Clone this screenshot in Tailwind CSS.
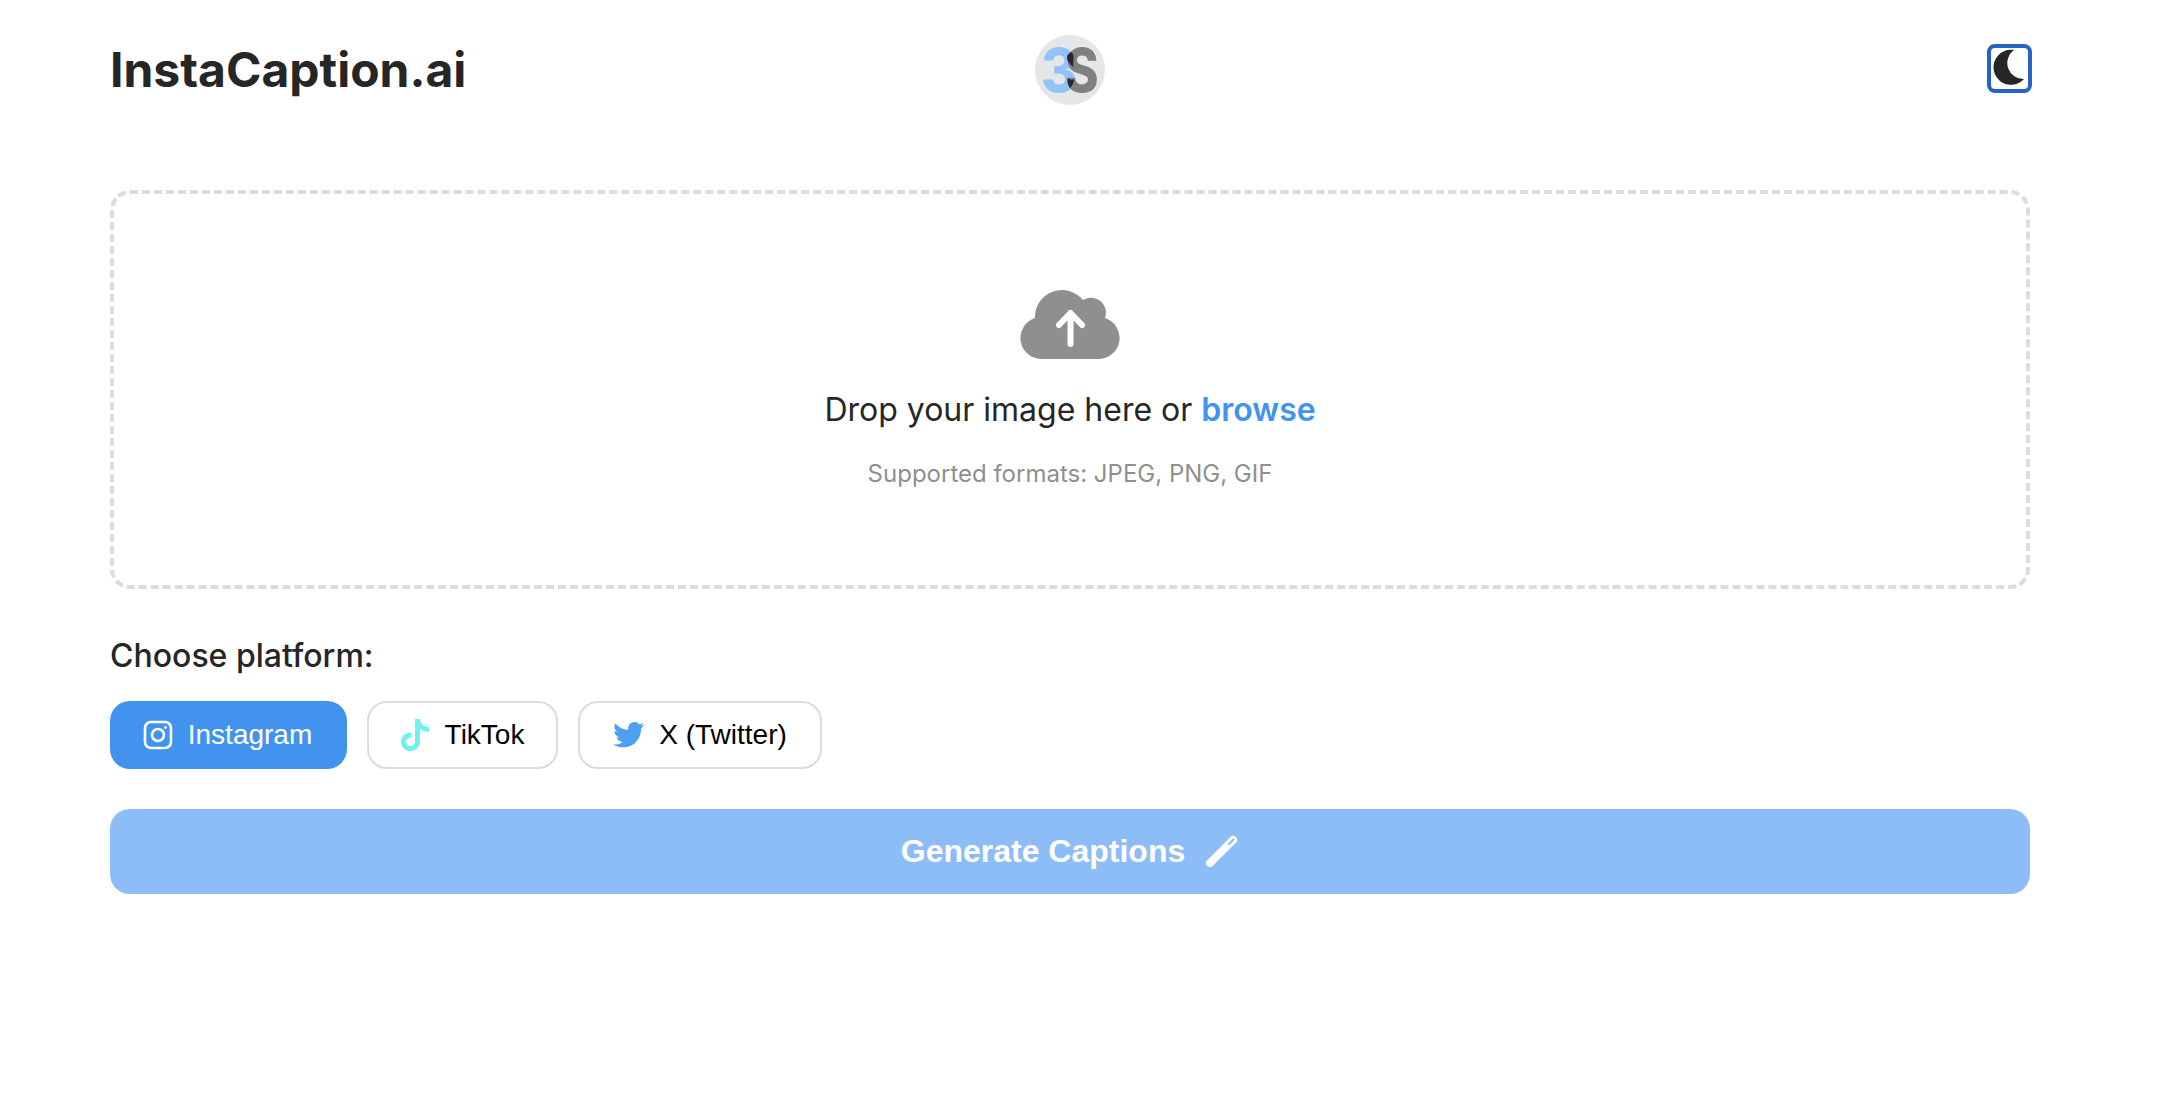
<!DOCTYPE html>
<html>
<head>
<meta charset="utf-8">
<script src="https://cdn.jsdelivr.net/npm/@tailwindcss/browser@4"></script>
</head>
<body class="bg-white font-['Inter',sans-serif] text-[#262626]">
<div class="w-[1924px] h-[1118px] ml-[110px] overflow-hidden">
  <header class="flex items-center justify-between w-[1920px] h-[140px]">
    <h1 class="text-[48px] leading-none font-bold w-[400px]">InstaCaption.ai</h1>
    <div class="relative w-[70px] h-[70px] rounded-full bg-[#e5e6e7] overflow-hidden font-extrabold text-[60px] leading-[70px]">
      <span class="absolute left-[6px] top-0 origin-left scale-x-[0.92] text-[#93c2fb]">3</span>
      <span class="absolute left-[30px] top-0 origin-left scale-x-[0.85] text-[#808080]">S</span>
      <svg class="absolute left-0 top-0" width="70" height="70" viewBox="0 0 70 70"><path d="M36 17 C38 18 39 21 38.500 24 C38 28 38 30 39 32 C35 30 32 26 32 22 C32 20 34 18 36 17 Z" fill="#2a2535"/><path d="M33 43 C35 45 37 45 39 44 C39 48 37 51 35 53 C33 50 32 47 33 43 Z" fill="#2a2535"/></svg>
    </div>
    <div class="w-[400px] flex justify-end self-start mt-[44px]">
      <button class="w-[45px] h-[49px] mr-[-2px] shrink-0 border-[4px] border-[#2563c9] rounded-[8px] flex items-start justify-start pl-[1px] pt-[1px]">
        <svg width="34" height="36" viewBox="0 0 34 36" class="shrink-0"><path d="M22 1 A17.500 17.500 0 1 0 32 30 A16 16 0 0 1 22 1 Z" fill="#262626"/></svg>
      </button>
    </div>
  </header>
  <main class="mt-[50px] w-[1920px]">
    <section class="h-[399px] border-[4px] border-dashed border-[#dcdcdc] rounded-[20px] flex flex-col items-center pt-[93px]">
      <svg width="100" height="72" viewBox="0 0 100 72" class="mb-[31px]">
        <path d="M21 72 A21 21 0 0 1 15 31 A27 27 0 0 1 63 13 A15 15 0 0 1 85 31 A21 21 0 0 1 79 72 Z" fill="#8f8f8f"/>
        <path d="M50.500 57 V26 M39 38 L50.500 26 L62 38" fill="none" stroke="#fff" stroke-width="6" stroke-linecap="round" stroke-linejoin="round"/>
      </svg>
      <p class="text-[32px] leading-[40px]">Drop your image here or <span class="text-[#4293f0] font-semibold">browse</span></p>
      <p class="mt-[29px] text-[24px] leading-[30px] text-[#8f8f8f]">Supported formats: JPEG, PNG, GIF</p>
    </section>
    <h2 class="mt-[47px] text-[32px] leading-[40px] font-medium">Choose platform:</h2>
    <div class="mt-[25px] flex gap-[20px] font-['Liberation_Sans',sans-serif] text-[28px] text-black">
      <button class="w-[237px] h-[68px] pr-[2px] rounded-[20px] bg-[#4293f0] text-white flex items-center justify-center gap-[15px]">
        <svg width="30" height="30" viewBox="0 0 30 30" fill="none" stroke="#fff" stroke-width="2.600"><rect x="2" y="2" width="26" height="26" rx="6"/><circle cx="15" cy="15" r="6"/><circle cx="22.500" cy="7.500" r="1.400" fill="#fff" stroke="none"/></svg>
        <span>Instagram</span>
      </button>
      <button class="w-[191px] h-[68px] rounded-[20px] border-[2px] border-[#dcdcdc] flex items-center justify-center gap-[14px]">
        <svg width="30" height="34" viewBox="0 0 30 34"><path d="M14 1 H19 C19.500 6 23 9 28 9 V14 C24.500 14 21.500 13 19 11 V23 C19 29 14.500 33 9.500 33 C4 33 0 29 0 23.500 C0 18 4.500 14 10.500 14.500 V19.500 C7.500 19 5 21 5 23.500 C5 26 7 28 9.500 28 C12 28 14 26 14 23 Z" fill="#72f0ec"/></svg>
        <span>TikTok</span>
      </button>
      <button class="w-[244px] h-[68px] rounded-[20px] border-[2px] border-[#dcdcdc] flex items-center justify-center gap-[14px]">
        <svg width="32" height="26" viewBox="0 0 24 20"><path d="M23.600 2.400c-.9.4-1.800.6-2.800.8 1-.6 1.800-1.600 2.100-2.700-.9.6-2 1-3.100 1.200C18.900.7 17.700 0 16.300 0c-2.700 0-4.900 2.200-4.900 4.900 0 .4 0 .8.100 1.100C7.500 5.800 3.900 3.900 1.500.9 1 1.600.8 2.500.8 3.400c0 1.700.9 3.200 2.200 4.100-.8 0-1.600-.2-2.200-.6v.1c0 2.400 1.700 4.400 3.900 4.800-.4.1-.8.2-1.300.2-.3 0-.6 0-.9-.1.600 2 2.400 3.400 4.600 3.400-1.700 1.300-3.800 2.100-6.100 2.100-.4 0-.8 0-1.200-.1 2.200 1.400 4.800 2.200 7.500 2.200 9.100 0 14-7.500 14-14v-.6c1-.7 1.800-1.600 2.500-2.500z" fill="#4f9ff0"/></svg>
        <span>X (Twitter)</span>
      </button>
    </div>
    <button class="mt-[40px] w-[1920px] h-[85px] rounded-[20px] bg-[#8dbdf7] text-white font-['Liberation_Sans',sans-serif] font-bold text-[32px] flex items-center justify-center gap-[20px]">
      <span class="pb-[2px]">Generate Captions</span>
      <svg width="34" height="34" viewBox="0 0 34 34" fill="none" class="mt-[-2px]"><path d="M5 29 L28 6" stroke="#fff" stroke-width="8" stroke-linecap="round"/><path d="M24 10 L28.500 5.500" stroke="#8dbdf7" stroke-width="2" stroke-linecap="round"/></svg>
    </button>
  </main>
</div>
</body>
</html>
